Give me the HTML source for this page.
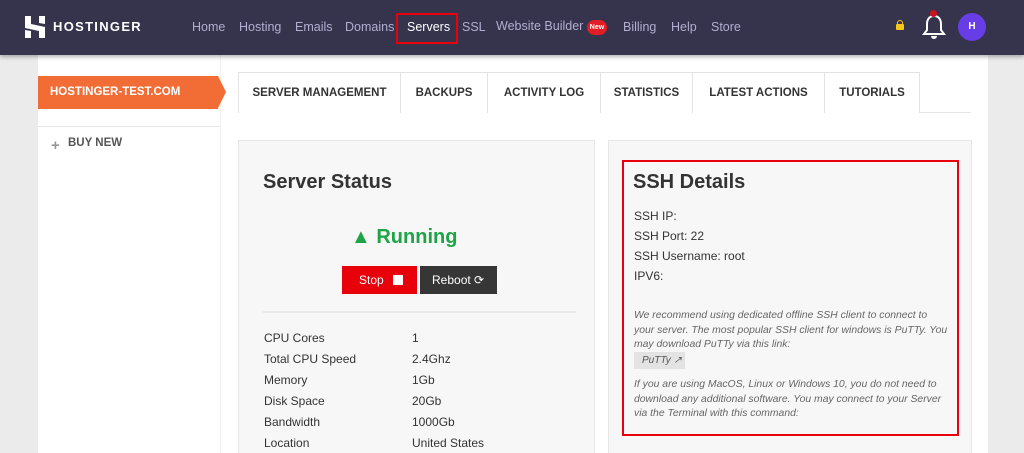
<!DOCTYPE html>
<html><head><style>
*{margin:0;padding:0;box-sizing:border-box}
html,body{width:1024px;height:453px;overflow:hidden}
body{background:#ebebeb;font-family:"Liberation Sans",sans-serif;position:relative;color:#333}
.a{position:absolute;white-space:nowrap}
#nav{left:0;top:0;width:1024px;height:55px;background:#36344d;box-shadow:0 2px 4px rgba(0,0,0,.3);z-index:2}
.nl{top:20px;font-size:12.5px;color:#b1aed0}
.tab{top:72px;height:41px;border:1px solid #e3e3e3;border-bottom:none;background:#fff;font-size:11.5px;font-weight:bold;color:#333;text-align:center;line-height:40px}
.row{font-size:12px;color:#333}
.it{font-size:10.4px;font-style:italic;color:#666;line-height:14.5px}
</style></head><body>
<div class="a" style="left:38px;top:55px;width:950px;height:398px;background:#fff"></div>
<div class="a" style="left:220px;top:55px;width:1px;height:398px;background:#f0f0f0"></div>
<div id="nav" class="a">
<svg class="a" style="left:25px;top:16px" width="20" height="22" viewBox="0 0 20 22"><path d="M0 0h6v8l14 3v11h-6v-7L0 12zM14 0h6v8l-6-1zM0 14l6 1v7H0z" fill="#fff"/></svg>
<div class="a" style="left:53px;top:19px;color:#fff;font-weight:bold;font-size:13px;letter-spacing:1.3px">HOSTINGER</div>
<div class="a nl" style="left:192px">Home</div>
<div class="a nl" style="left:239px">Hosting</div>
<div class="a nl" style="left:295px">Emails</div>
<div class="a nl" style="left:345px">Domains</div>
<div class="a" style="left:396px;top:13px;width:62px;height:31px;border:2px solid #e8000b"></div>
<div class="a nl" style="left:407px;color:#fff">Servers</div>
<div class="a nl" style="left:462px">SSL</div>
<div class="a nl" style="left:496px;top:19px">Website Builder</div>
<div class="a" style="left:587px;top:20px;width:20px;height:15px;border-radius:8px;background:#e21d26;color:#fff;font-size:7px;font-weight:bold;text-align:center;line-height:15px">New</div>
<div class="a nl" style="left:623px">Billing</div>
<div class="a nl" style="left:671px">Help</div>
<div class="a nl" style="left:711px">Store</div>
<div class="a" style="left:896px;top:24px;width:8px;height:6px;background:#f5c518;border-radius:1px"></div>
<div class="a" style="left:897px;top:20px;width:6px;height:6px;border:1.5px solid #f5c518;border-radius:3px 3px 0 0"></div>
<svg class="a" style="left:922px;top:12px" width="24" height="30" viewBox="0 0 24 30"><path d="M12 4c-5 0-7 4-7 8v6l-3 4h20l-3-4v-6c0-4-2-8-7-8z" fill="none" stroke="#fff" stroke-width="2"/><path d="M9 24a3 3 0 0 0 6 0z" fill="#fff"/></svg>
<div class="a" style="left:930px;top:10px;width:7px;height:7px;border-radius:50%;background:#d0101b"></div>
<div class="a" style="left:958px;top:13px;width:28px;height:28px;border-radius:50%;background:#673de6;color:#fff;font-size:10px;font-weight:bold;text-align:center;line-height:28px">H</div>
</div>
<div class="a" style="left:38px;top:76px;width:180px;height:33px;background:#f26c35;color:#fff;font-weight:bold;font-size:11.5px;line-height:33px;padding-left:12px">HOSTINGER-TEST.COM</div>
<div class="a" style="left:218px;top:76px;width:0;height:0;border-top:16.5px solid transparent;border-bottom:16.5px solid transparent;border-left:8px solid #f26c35"></div>
<div class="a" style="left:38px;top:126px;width:182px;height:1px;background:#e6e6e6"></div>
<div class="a" style="left:51px;top:137px;font-size:15px;color:#999;font-weight:bold">+</div>
<div class="a" style="left:68px;top:137px;font-size:11.5px;color:#555;font-weight:bold">BUY NEW</div>
<div class="a" style="left:238px;top:112px;width:733px;height:1px;background:#e6e6e6"></div>
<div class="a tab" style="left:238px;width:163px">SERVER MANAGEMENT</div>
<div class="a tab" style="left:400px;width:88px">BACKUPS</div>
<div class="a tab" style="left:487px;width:114px">ACTIVITY LOG</div>
<div class="a tab" style="left:600px;width:93px">STATISTICS</div>
<div class="a tab" style="left:692px;width:133px">LATEST ACTIONS</div>
<div class="a tab" style="left:824px;width:96px">TUTORIALS</div>
<div class="a" style="left:238px;top:140px;width:357px;height:320px;background:#f7f7f7;border:1px solid #e6e6e6"></div>
<div class="a" style="left:608px;top:140px;width:364px;height:320px;background:#f7f7f7;border:1px solid #e6e6e6"></div>
<div class="a" style="left:263px;top:171px;font-size:20px;font-weight:bold;color:#333">Server Status</div>
<div class="a" style="left:351px;top:226px;font-size:20px;font-weight:bold;color:#1ea446">▲ Running</div>
<div class="a" style="left:342px;top:266px;width:75px;height:28px;background:#e8000b;color:#fff;font-size:12px;line-height:28px;padding-left:17px">Stop <span style="display:inline-block;width:10px;height:10px;background:#fff;vertical-align:-1px;margin-left:6px"></span></div>
<div class="a" style="left:420px;top:266px;width:77px;height:28px;background:#363636;color:#fff;font-size:12px;line-height:28px;padding-left:12px">Reboot ⟳</div>
<div class="a" style="left:263px;top:311px;width:313px;height:2px;background:#e9e9e9"></div>
<div class="a row" style="left:264px;top:331px">CPU Cores</div><div class="a row" style="left:412px;top:331px">1</div>
<div class="a row" style="left:264px;top:352px">Total CPU Speed</div><div class="a row" style="left:412px;top:352px">2.4Ghz</div>
<div class="a row" style="left:264px;top:373px">Memory</div><div class="a row" style="left:412px;top:373px">1Gb</div>
<div class="a row" style="left:264px;top:394px">Disk Space</div><div class="a row" style="left:412px;top:394px">20Gb</div>
<div class="a row" style="left:264px;top:415px">Bandwidth</div><div class="a row" style="left:412px;top:415px">1000Gb</div>
<div class="a row" style="left:264px;top:436px">Location</div><div class="a row" style="left:412px;top:436px">United States</div>
<div class="a" style="left:622px;top:160px;width:337px;height:276px;border:2px solid #e8000b"></div>
<div class="a" style="left:633px;top:171px;font-size:20px;font-weight:bold;color:#333">SSH Details</div>
<div class="a row" style="left:634px;top:209px">SSH IP:</div>
<div class="a row" style="left:634px;top:229px">SSH Port: 22</div>
<div class="a row" style="left:634px;top:249px">SSH Username: root</div>
<div class="a row" style="left:634px;top:269px">IPV6:</div>
<div class="a it" style="left:634px;top:309px">We recommend using dedicated offline SSH client to connect to<br>your server. The most popular SSH client for windows is PuTTy. You<br>may download PuTTy via this link:</div>
<div class="a" style="left:634px;top:352px;width:51px;height:17px;background:#e3e3e3;font-size:10px;font-style:italic;color:#555;line-height:17px;padding-left:8px">PuTTy ↗</div>
<div class="a it" style="left:634px;top:378px">If you are using MacOS, Linux or Windows 10, you do not need to<br>download any additional software. You may connect to your Server<br>via the Terminal with this command:</div>
</body></html>
